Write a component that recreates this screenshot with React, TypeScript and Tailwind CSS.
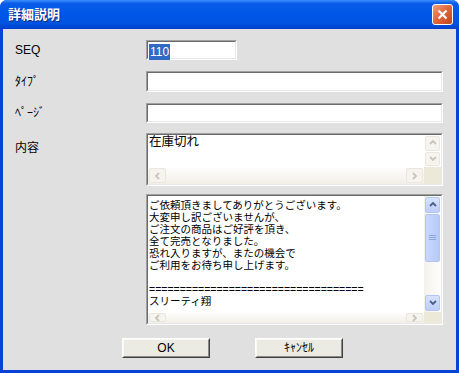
import React from "react";

const body = "font-['Liberation_Sans','Noto_Sans_CJK_JP',sans-serif] text-[12px] text-black";

const letter = [
  "ご依頼頂きましてありがとうございます。",
  "大変申し訳ございませんが、",
  "ご注文の商品はご好評を頂き、",
  "全て完売となりました。",
  "恐れ入りますが、またの機会で",
  "ご利用をお待ち申し上げます。",
  "\u00a0",
  "===================================",
  "スリーティ翔",
];

function Chevron({ dir, color }: { dir: "up" | "down" | "left" | "right"; color: string }) {
  const d = {
    up: "M1 5 L4 2 L7 5",
    down: "M1 2 L4 5 L7 2",
    left: "M5 1 L2 4 L5 7",
    right: "M2 1 L5 4 L2 7",
  }[dir];
  return (
    <svg width="8" height="8" viewBox="0 0 8 8">
      <path d={d} fill="none" stroke={color} strokeWidth="1.8" />
    </svg>
  );
}

function ScrollBtn({
  dir,
  active,
  className = "",
}: {
  dir: "up" | "down" | "left" | "right";
  active?: boolean;
  className?: string;
}) {
  return (
    <div
      className={
        "flex items-center justify-center rounded-[2px] border " +
        (active
          ? "border-[#b3c6f5] bg-[linear-gradient(to_bottom,#d8e3fc,#bccdf8)] "
          : "border-[#e9e7de] bg-[#f5f4ef] ") +
        className
      }
    >
      <Chevron dir={dir} color={active ? "#4d6185" : "#c9c6b8"} />
    </div>
  );
}

function Sunken({ className, children }: { className: string; children?: React.ReactNode }) {
  return (
    <div className={"border border-t-[#a0a0a0] border-l-[#a0a0a0] border-b-white border-r-white " + className}>
      <div className="h-full w-full border border-t-[#6a6a6a] border-l-[#6a6a6a] border-b-[#e8e8e8] border-r-[#e8e8e8] bg-white">
        {children}
      </div>
    </div>
  );
}

function Button({ label }: { label: string }) {
  return (
    <div className="h-[20px] w-[88px] border border-t-white border-l-white border-b-[#404040] border-r-[#404040]">
      <div className="flex h-full w-full items-center justify-center border border-t-[#f8f8f4] border-l-[#f8f8f4] border-b-[#8a8a8a] border-r-[#8a8a8a] bg-[#ecebe3]">
        {label}
      </div>
    </div>
  );
}

export default function App() {
  return (
    <div className={"flex h-[373px] w-[459px] flex-col overflow-hidden rounded-t-[7px] bg-[#0843d9] " + body}>
      <div className="flex h-[29px] shrink-0 items-center justify-between bg-[linear-gradient(to_bottom,#3c8ffa,#0a5ce8_12%,#0057e8_45%,#0053e0_80%,#0040cc)] pl-[8px] pr-[6px]">
        <span className="text-[13px] font-bold text-white [text-shadow:1px_1px_0_#0b2a86]">詳細説明</span>
        <div className="flex h-[21px] w-[21px] items-center justify-center rounded-[3px] border border-white bg-[linear-gradient(135deg,#f0a080,#e06a3e_45%,#c2431c)]">
          <svg width="11" height="11" viewBox="0 0 11 11">
            <path d="M1.5 1.5 L9.5 9.5 M9.5 1.5 L1.5 9.5" stroke="white" strokeWidth="2.2" />
          </svg>
        </div>
      </div>

      <div className="mx-[3px] mb-[3px] flex flex-1 flex-col bg-[#e0e0e0] pt-[11px] pl-[12px] pr-[13px]">
        <div className="flex items-center">
          <span className="w-[131px]">SEQ</span>
          <Sunken className="h-[20px] w-[91px]">
            <div className="p-px">
              <span className="inline-block h-[16px] bg-[#316ac5] px-px leading-[16px] text-white">110</span>
            </div>
          </Sunken>
        </div>

        <div className="mt-[11px] flex items-center">
          <span className="w-[131px]">ﾀｲﾌﾟ</span>
          <Sunken className="h-[21px] flex-1" />
        </div>

        <div className="mt-[11px] flex items-center">
          <span className="w-[131px]">ﾍﾟｰｼﾞ</span>
          <Sunken className="h-[20px] flex-1" />
        </div>

        <div className="mt-[10px] flex items-start">
          <span className="mt-[6px] w-[131px]">内容</span>
          <Sunken className="h-[53px] flex-1">
            <div className="flex h-full flex-col">
              <div className="flex min-h-0 flex-1">
                <div className="flex-1 pl-px text-[12.5px] leading-[14px]">在庫切れ</div>
                <div className="flex w-[17px] flex-col gap-px p-px">
                  <ScrollBtn dir="up" className="h-[15px]" />
                  <ScrollBtn dir="down" className="h-[15px]" />
                </div>
              </div>
              <div className="flex h-[17px] bg-[linear-gradient(to_bottom,#fefefe,#f1efe6)]">
                <div className="flex flex-1 justify-between p-px">
                  <ScrollBtn dir="left" className="w-[17px]" />
                  <ScrollBtn dir="right" className="w-[17px]" />
                </div>
                <div className="w-[17px] bg-[#ece9d8]" />
              </div>
            </div>
          </Sunken>
        </div>

        <div className="mt-[8px] flex">
          <span className="w-[131px]" />
          <Sunken className="h-[131px] flex-1">
            <div className="flex h-full flex-col">
              <div className="flex min-h-0 flex-1">
                <div className="flex-1 overflow-hidden pt-[3px] pl-px text-[10.5px] leading-[12px]">
                  {letter.map((l, i) => (
                    <div key={i} className="whitespace-nowrap">
                      {l}
                    </div>
                  ))}
                </div>
                <div className="flex w-[17px] flex-col bg-[linear-gradient(to_right,#f3f1ea,#fefefe)] p-px">
                  <ScrollBtn dir="up" active className="h-[16px]" />
                  <div className="mt-px flex h-[48px] items-center justify-center rounded-[2px] border border-[#b3c6f5] bg-[linear-gradient(to_right,#c9d8fc,#b6caf7)]">
                    <svg width="7" height="8" viewBox="0 0 7 8">
                      <path d="M0 1.5 H7 M0 3.5 H7 M0 5.5 H7" stroke="#8da5e0" strokeWidth="1" />
                    </svg>
                  </div>
                  <div className="flex-1" />
                  <ScrollBtn dir="down" active className="h-[16px]" />
                </div>
              </div>
              <div className="flex h-[11px] bg-[linear-gradient(to_bottom,#fefefe,#f1efe6)]">
                <div className="flex flex-1 justify-between p-px">
                  <ScrollBtn dir="left" className="w-[17px]" />
                  <ScrollBtn dir="right" className="w-[17px]" />
                </div>
                <div className="w-[17px] bg-[#ece9d8]" />
              </div>
            </div>
          </Sunken>
        </div>

        <div className="mt-[13px] flex gap-[45px] pl-[107px]">
          <Button label="OK" />
          <Button label="ｷｬﾝｾﾙ" />
        </div>
      </div>
    </div>
  );
}
